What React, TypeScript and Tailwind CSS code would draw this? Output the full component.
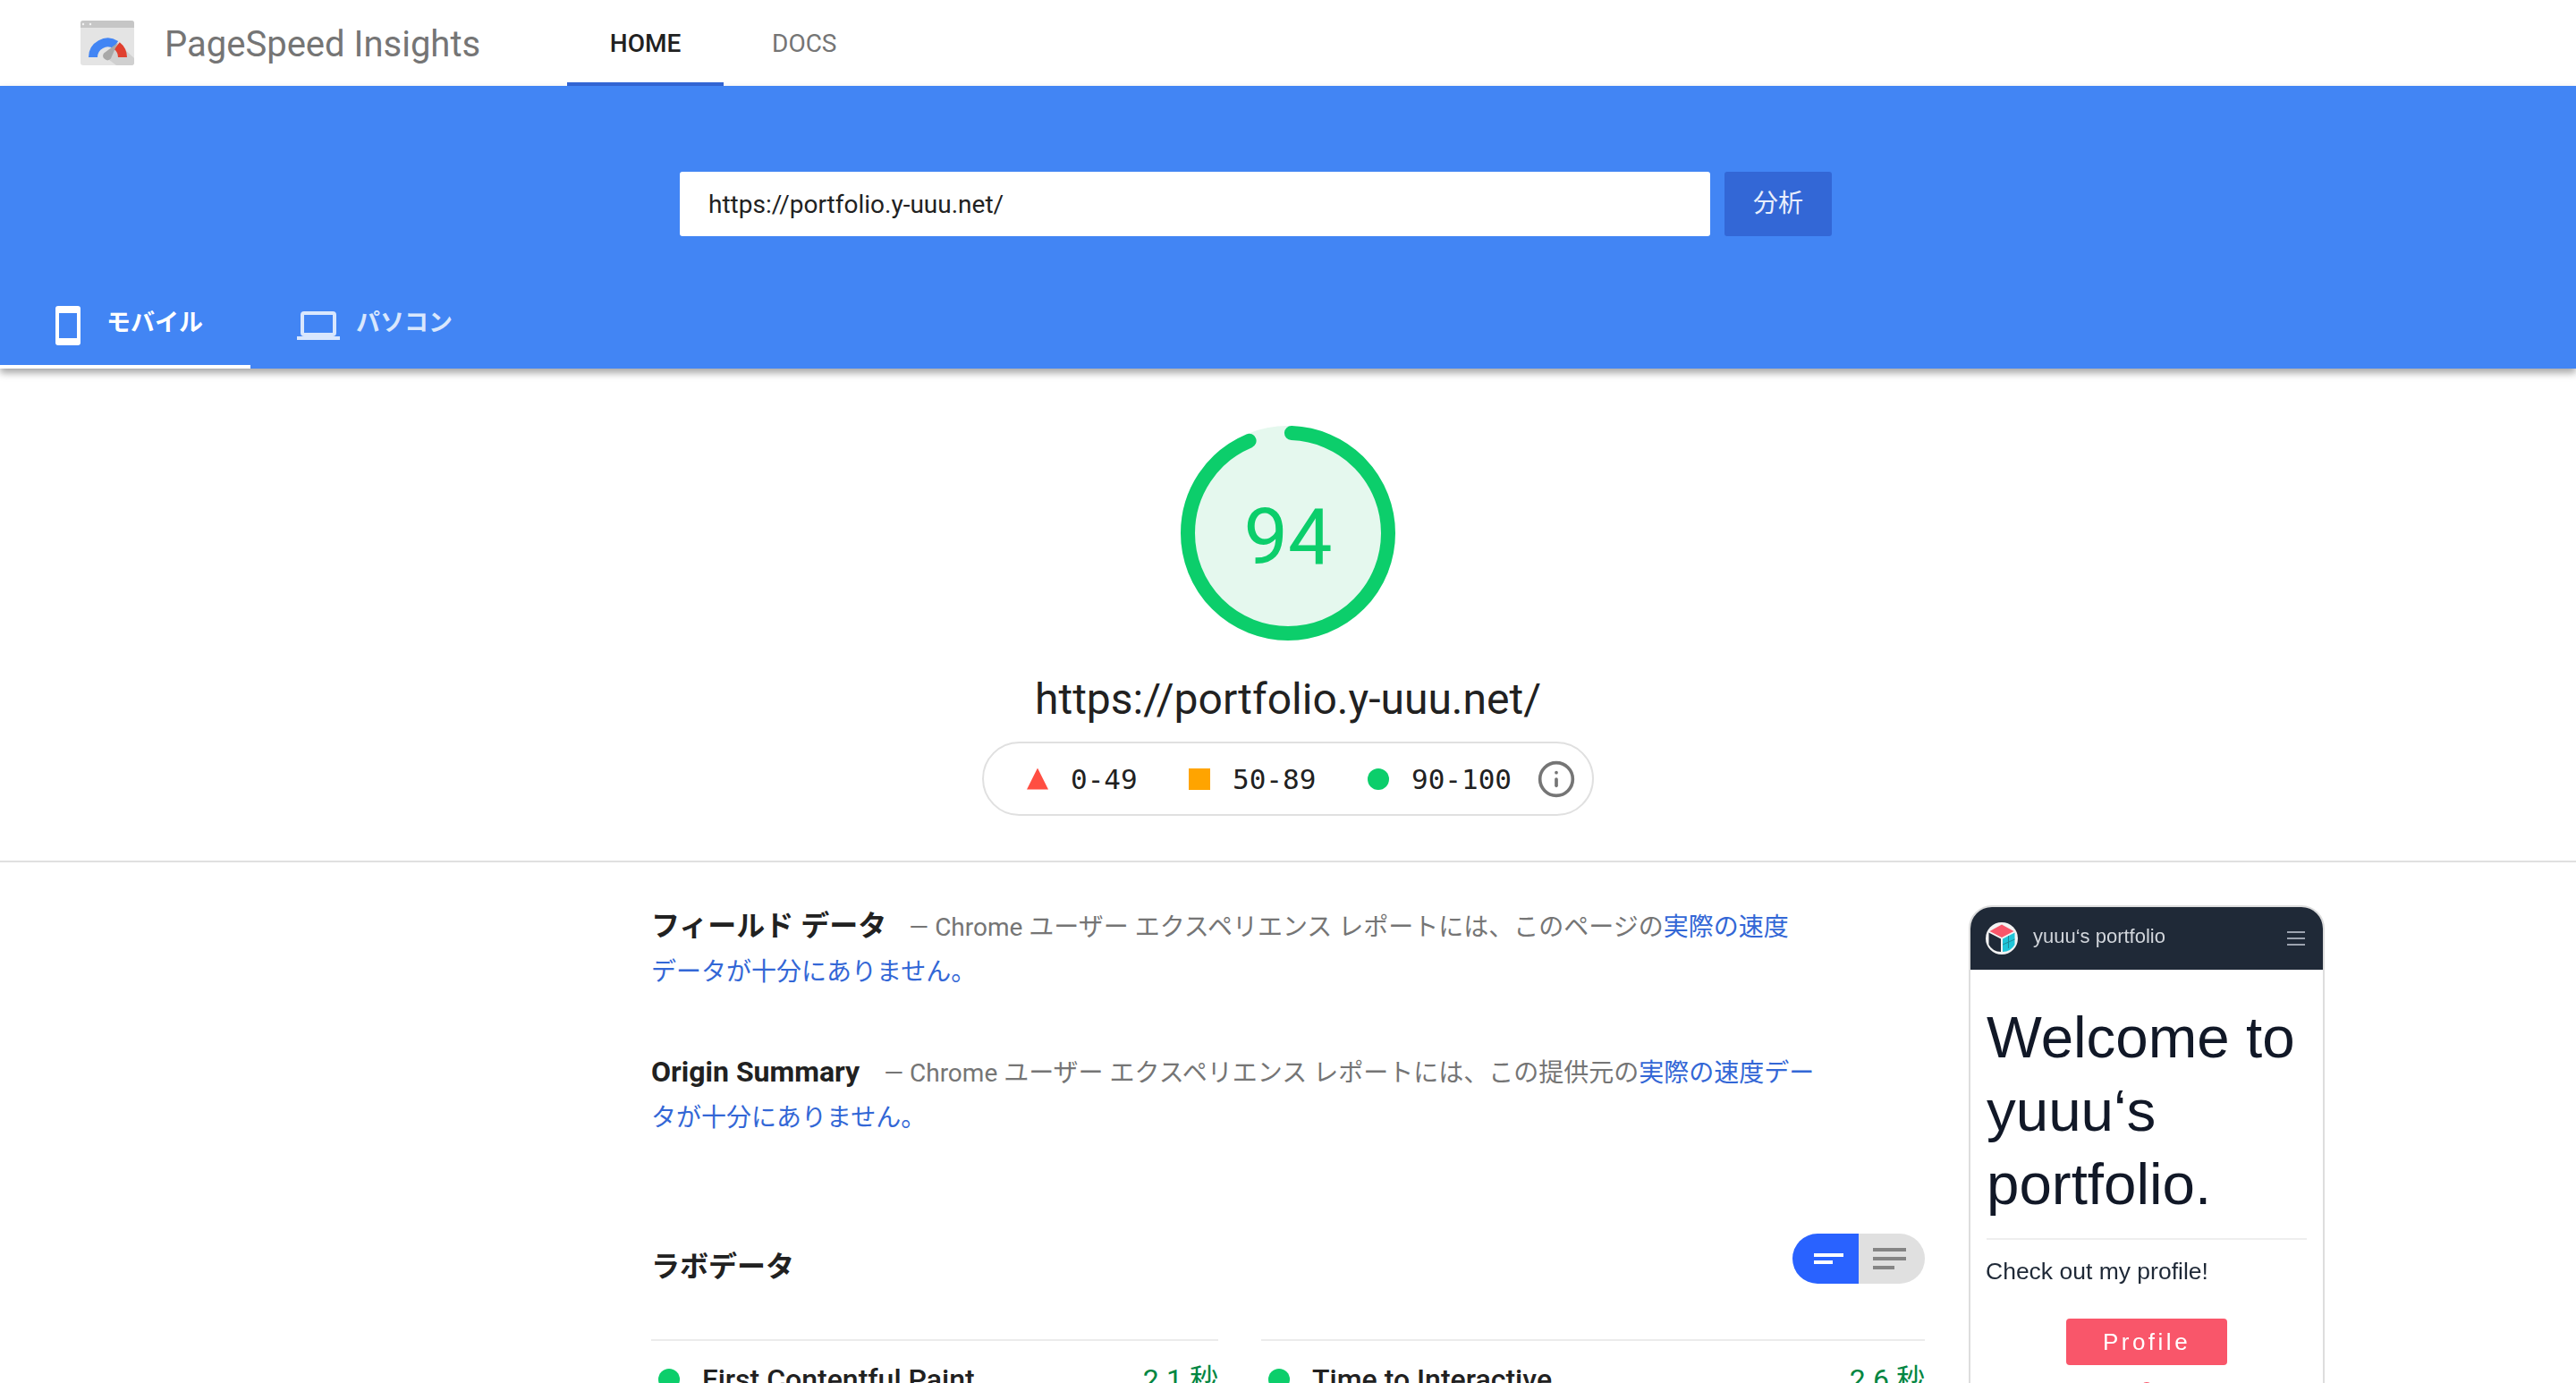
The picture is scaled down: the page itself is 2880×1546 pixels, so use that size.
import { Info } from "lucide-react";

const ROBOTO = "font-['Roboto','Noto_Sans_CJK_JP',sans-serif]";

function Logo() {
  return (
    <svg width="60" height="50" viewBox="0 0 60 50">
      <rect x="0" y="0" width="60" height="50" rx="3" fill="#e4e4e4" />
      <path d="M0 3a3 3 0 0 1 3-3h54a3 3 0 0 1 3 3v5H0z" fill="#c6c6c6" />
      <circle cx="3" cy="4" r="1.2" fill="#f2f2f2" />
      <circle cx="11" cy="4" r="1.2" fill="#f2f2f2" />
      <path d="M41.5 25 L60 42 V47 a3 3 0 0 1-3 3 H40 L28 41z" fill="#d0d0d0" />
      <path d="M14 41 A16.5 16.5 0 0 1 39.4 27.1" fill="none" stroke="#4285f4" strokeWidth="10" />
      <path d="M40.7 28.1 A16.5 16.5 0 0 1 47 41" fill="none" stroke="#e0402f" strokeWidth="10" />
      <path d="M41.5 25 L33.9 42.6 A5 5 0 0 1 26.1 36.4 Z" fill="#a8a8a8" />
    </svg>
  );
}

function Gauge() {
  const r = 112;
  const c = 2 * Math.PI * r;
  return (
    <div className="relative w-[240px] h-[240px]">
      <svg width="240" height="240" viewBox="0 0 240 240" className="-rotate-90">
        <circle cx="120" cy="120" r="120" fill="#e5f8ee" />
        <circle
          cx="120"
          cy="120"
          r={r}
          fill="none"
          stroke="#0cce6b"
          strokeWidth="16"
          strokeLinecap="round"
          strokeDasharray={`${c * 0.93} ${c}`}
          strokeDashoffset={-c * 0.0057}
        />
      </svg>
      <div className="absolute inset-0 pt-[8px] flex items-center justify-center text-[88px] text-[#0cce6b] leading-none">
        94
      </div>
    </div>
  );
}

function Metric({ name, value }: { name: string; value: string }) {
  return (
    <div className="border-t-2 border-[#ebebeb] pt-[19px] flex items-center">
      <span className="w-[24px] h-[24px] rounded-full bg-[#0cce6b] ml-[8px] mr-[25px]" />
      <span className="text-[32px] leading-[48px] font-medium text-[#212121] flex-1">{name}</span>
      <span className="text-[32px] leading-[48px] text-[#018642]">{value}</span>
    </div>
  );
}

function LegendItem({ icon, label, className }: { icon: React.ReactNode; label: string; className: string }) {
  return (
    <div className={`flex items-center ${className}`}>
      {icon}
      <span className="ml-[25px] pt-[2px] font-['DejaVu_Sans_Mono',monospace] text-[31px] text-[#212121] leading-none">{label}</span>
    </div>
  );
}

function SitePreview() {
  return (
    <div className="w-[398px] h-[600px] shrink-0 ml-[49px] border-2 border-[#dddddd] rounded-t-[26px] overflow-hidden font-['Liberation_Sans',sans-serif] blur-[0.4px]">
      <div className="h-[70px] bg-[#1f2937] flex items-center pl-[17px] pr-[20px]">
        <svg width="36" height="36" viewBox="0 0 36 36">
          <circle cx="18" cy="18" r="18" fill="#f3f3f3" />
          <path d="M18 2.5 L31.5 10 L18 17 L4.5 10z" fill="#f9566a" />
          <path d="M3.5 11.5 L17 18.5 V33 A15.5 15.5 0 0 1 3.5 25z" fill="#1f2937" />
          <path d="M19 18.5 L32.5 11.5 V25 A15.5 15.5 0 0 1 19 33z" fill="#20c5d8" />
          <path d="M25.5 15 V29 M19 25 L32.5 19" stroke="#1f8a9a" strokeWidth="1" />
        </svg>
        <span className="ml-[17px] -mt-[6px] text-[22px] text-[#d1d5db] flex-1">yuuu‘s portfolio</span>
        <div className="w-[20px] flex flex-col gap-[5px]">
          <div className="h-[2px] bg-[#9ca3af]" />
          <div className="h-[2px] bg-[#9ca3af]" />
          <div className="h-[2px] bg-[#9ca3af]" />
        </div>
      </div>
      <div className="px-[18px] pt-[35px]">
        <h1 className="text-[65.5px] leading-[82px] text-[#111827]">
          Welcome to
          <br />
          yuuu‘s
          <br />
          portfolio.
        </h1>
        <div className="h-[2px] bg-[#eeeeee] mt-[19px]" />
        <p className="text-[26.5px] leading-[32px] text-[#1f2937] mt-[19px] -ml-[1px]">Check out my profile!</p>
        <div className="flex justify-center mt-[37px]">
          <div className="w-[180px] h-[52px] rounded-[4px] bg-[#f9566a] text-white text-[26px] tracking-[3.5px] flex items-center justify-center">
            Profile
          </div>
        </div>
        <div className="w-[14px] h-[14px] rounded-full bg-[#f9566a] mx-auto mt-[19px]" />
      </div>
    </div>
  );
}

export default function App() {
  return (
    <div className={`w-[2880px] h-[1546px] overflow-hidden bg-white ${ROBOTO}`}>
      <header className="h-[96px] flex items-center pl-[90px]">
        <Logo />
        <span className="ml-[34px] mt-[4px] text-[40px] text-[#757575] w-[450px]">PageSpeed Insights</span>
        <nav className="flex h-full text-[28px]">
          <a className="w-[175px] pt-[6px] flex items-center justify-center font-medium text-[#212121] border-b-4 border-[#3367d6]">HOME</a>
          <a className="ml-[30px] px-[24px] pt-[6px] flex items-center text-[#757575] border-b-4 border-transparent">DOCS</a>
        </nav>
      </header>

      <section className="h-[316px] bg-[#4285f4] flex flex-col justify-between shadow-[0_5px_8px_rgba(0,0,0,0.35)] relative">
        <div className="pt-[96px] pl-[760px] flex gap-[16px]">
          <div className="w-[1152px] h-[72px] pt-[2px] bg-white rounded-[3px] flex items-center pl-[32px] text-[28px] text-[#212121]">
            https://portfolio.y-uuu.net/
          </div>
          <button className="w-[120px] h-[72px] bg-[#3367d6] rounded-[3px] text-[28px] text-[#e8eefc]">分析</button>
        </div>
        <div className="flex h-[92px] text-[27px] leading-[40px]">
          <div className="w-[280px] flex items-start pl-[62px] border-b-4 border-white text-white font-bold">
            <svg width="28" height="44" viewBox="0 0 28 44" className="mt-[22px]">
              <rect x="0" y="0" width="28" height="44" rx="3" fill="#fff" />
              <rect x="4" y="8" width="20" height="28" fill="#4285f4" />
            </svg>
            <span className="ml-[29px] mt-[21px]">モバイル</span>
          </div>
          <div className="flex items-start pl-[52px] text-[#d9e7fd] font-bold">
            <svg width="48" height="32" viewBox="0 0 48 32" className="mt-[28px]">
              <rect x="6" y="2" width="36" height="24" rx="2" fill="none" stroke="#d9e7fd" strokeWidth="4" />
              <rect x="0" y="28" width="48" height="4" fill="#d9e7fd" />
            </svg>
            <span className="ml-[18px] mt-[21px]">パソコン</span>
          </div>
        </div>
      </section>

      <section className="h-[552px] border-b-2 border-[#e0e0e0] flex flex-col items-center pt-[64px]">
        <Gauge />
        <div className="mt-[36px] text-[48px] leading-[60px] text-[#212121]">https://portfolio.y-uuu.net/</div>
        <div className="mt-[17px] w-[684px] h-[83px] rounded-[42px] border-2 border-[#e0e0e0] flex items-center pl-[48px]">
          <LegendItem
            className="w-[181px]"
            label="0-49"
            icon={<div className="w-[24px] h-[24px] bg-[#ff4e42] [clip-path:polygon(50%_0,100%_100%,0_100%)]" />}
          />
          <LegendItem className="w-[200px]" label="50-89" icon={<div className="w-[24px] h-[24px] bg-[#ffa400]" />} />
          <LegendItem
            className="w-[189px]"
            label="90-100"
            icon={<div className="w-[24px] h-[24px] rounded-full bg-[#0cce6b]" />}
          />
          <Info size={44} strokeWidth={2} className="text-[#757575]" />
        </div>
      </section>

      <section className="flex pl-[728px] pt-[48px]">
        <div className="w-[1424px] shrink-0 -mt-[2px]">
          <p className="w-[1312px] text-[28px] leading-[50px] text-[#757575]">
            <span className="text-[32px] font-bold text-[#212121] mr-[25px]">フィールド データ</span>
            — Chrome ユーザー エクスペリエンス レポートには、このページの<a className="text-[#3367d6]">実際の速度<br />データが十分にありません。</a>
          </p>
          <p className="w-[1312px] mt-[61px] text-[28px] leading-[50px] text-[#757575]">
            <span className="text-[32px] font-bold text-[#212121] mr-[27px]">Origin Summary</span>
            — Chrome ユーザー エクスペリエンス レポートには、この提供元の<a className="text-[#3367d6]">実際の速度データが十分にありません。</a>
          </p>
          <div className="mt-[104px] flex items-center justify-between">
            <h2 className="text-[32px] leading-none mt-[18px] font-bold text-[#212121]">ラボデータ</h2>
            <div className="flex w-[148px] h-[56px] rounded-[28px] overflow-hidden">
              <div className="w-[74px] bg-[#2962ff] flex flex-col gap-[4px] pl-[24px] justify-center">
                <div className="w-[33px] h-[4px] bg-white" />
                <div className="w-[21px] h-[4px] bg-white" />
              </div>
              <div className="flex-1 bg-[#e0e0e0] flex flex-col gap-[6px] pl-[16px] justify-center">
                <div className="w-[37px] h-[4px] bg-[#858585]" />
                <div className="w-[37px] h-[4px] bg-[#858585]" />
                <div className="w-[24px] h-[4px] bg-[#858585]" />
              </div>
            </div>
          </div>
          <div className="grid grid-cols-[634px_742px] gap-x-[48px] mt-[62px]">
            <Metric name="First Contentful Paint" value="2.1 秒" />
            <Metric name="Time to Interactive" value="2.6 秒" />
          </div>
        </div>
        <SitePreview />
      </section>
    </div>
  );
}
